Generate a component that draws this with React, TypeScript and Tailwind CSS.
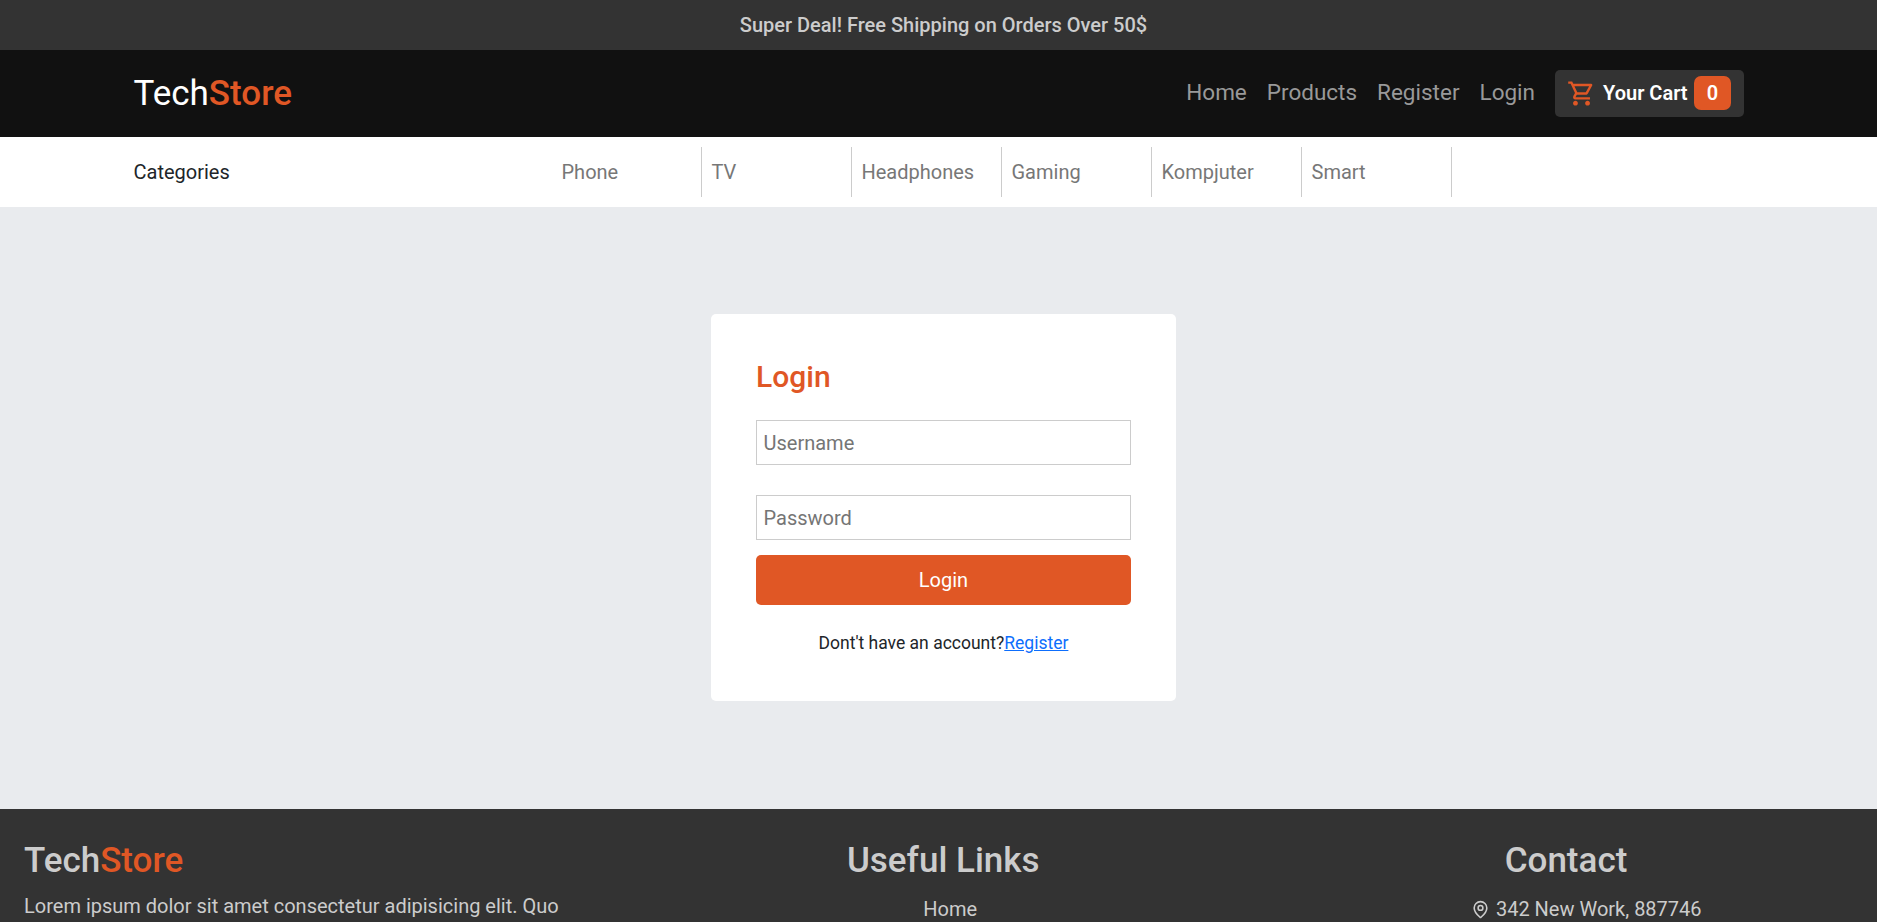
import { MdOutlineShoppingCart } from "react-icons/md";
import { MapPin } from "lucide-react";

const links = ["Home", "Products", "Register", "Login"];
const categories = ["Phone", "TV", "Headphones", "Gaming", "Kompjuter", "Smart"];

function TopBar() {
  return (
    <div className="flex h-[50px] shrink-0 items-center justify-center bg-[#333] pl-[10px] text-[20px] font-medium text-[#ccc]">
      Super Deal! Free Shipping on Orders Over 50$
    </div>
  );
}

function Navbar() {
  return (
    <nav className="flex h-[87px] shrink-0 items-center justify-between bg-[#111] pr-[133px] pl-[133.5px]">
      <a className="text-[35px] leading-none text-white">
        Tech<span className="font-medium text-[#e05725]">Store</span>
      </a>
      <div className="flex items-center gap-5">
        {links.map((link) => (
          <a key={link} className="pb-[3px] text-[22.5px] leading-none text-[#999]">{link}</a>
        ))}
        <button className="flex h-[47px] w-[189px] items-center rounded-[5px] bg-[#333] pb-px pl-[12px]">
          <MdOutlineShoppingCart className="size-[29px] text-[#e05725]" />
          <span className="ml-[7px] text-[20px] font-semibold text-white">Your Cart</span>
          <span className="ml-auto mr-[13px] flex h-[34px] w-[37px] items-center justify-center rounded-[7px] bg-[#e05725] text-[20px] font-semibold text-white">0</span>
        </button>
      </div>
    </nav>
  );
}

function Categories() {
  return (
    <div className="flex h-[70px] shrink-0 items-center bg-white pl-[133.5px] text-[20px]">
      <span className="w-[418px] text-[#212529]">Categories</span>
      {categories.map((category) => (
        <a key={category} className="flex h-[50px] w-[150px] items-center border-r border-[#ccc] pl-[10px] text-[#777]">
          {category}
        </a>
      ))}
    </div>
  );
}

function LoginCard() {
  return (
    <form className="flex h-[387px] w-[465px] flex-col rounded-[5px] bg-white px-[45px] pt-[45px]">
      <h2 className="text-[30px] leading-[36px] font-medium text-[#e05725]">Login</h2>
      <input placeholder="Username" className="mt-[25px] h-[45px] border border-[#ccc] px-[6.5px] text-[20px] placeholder:text-[#757575]" />
      <input placeholder="Password" className="mt-[30px] h-[45px] border border-[#ccc] px-[6.5px] text-[20px] placeholder:text-[#757575]" />
      <button type="button" className="mt-[15px] h-[50px] rounded-[5px] bg-[#e05725] text-[20px] text-white">Login</button>
      <p className="mt-[25px] text-center text-[17.5px] leading-[27px] text-[#212529]">
        Dont't have an account?<a className="text-[#0d6efd] underline">Register</a>
      </p>
    </form>
  );
}

function Footer() {
  return (
    <footer className="flex h-[113px] shrink-0 overflow-hidden bg-[#333] pt-[31px] text-[20px] text-[#ccc]">
      <div className="w-[631.5px] pl-[24px]">
        <h2 className="text-[35px] leading-[42px] font-medium">
          Tech<span className="text-[#e05725]">Store</span>
        </h2>
        <p className="mt-[9px] leading-[30px]">Lorem ipsum dolor sit amet consectetur adipisicing elit. Quo</p>
      </div>
      <div className="flex w-[623.5px] flex-col items-center">
        <h2 className="text-[35px] leading-[42px] font-medium">Useful Links</h2>
        <a className="mt-[12px] ml-[14px] leading-[30px]">Home</a>
      </div>
      <div className="flex w-[622px] flex-col items-center">
        <h2 className="text-[35px] leading-[42px] font-medium">Contact</h2>
        <p className="mt-[12px] ml-[41px] flex items-center gap-[5.5px] leading-[30px]">
          <MapPin className="size-[19px]" />
          342 New Work, 887746
        </p>
      </div>
    </footer>
  );
}

export default function App() {
  return (
    <div className="flex h-[922px] w-full flex-col overflow-hidden bg-[#e9ebee] font-[Roboto,sans-serif]">
      <TopBar />
      <Navbar />
      <Categories />
      <main className="flex min-h-0 flex-1 items-start justify-center pt-[107px] pl-[10px]">
        <LoginCard />
      </main>
      <Footer />
    </div>
  );
}
